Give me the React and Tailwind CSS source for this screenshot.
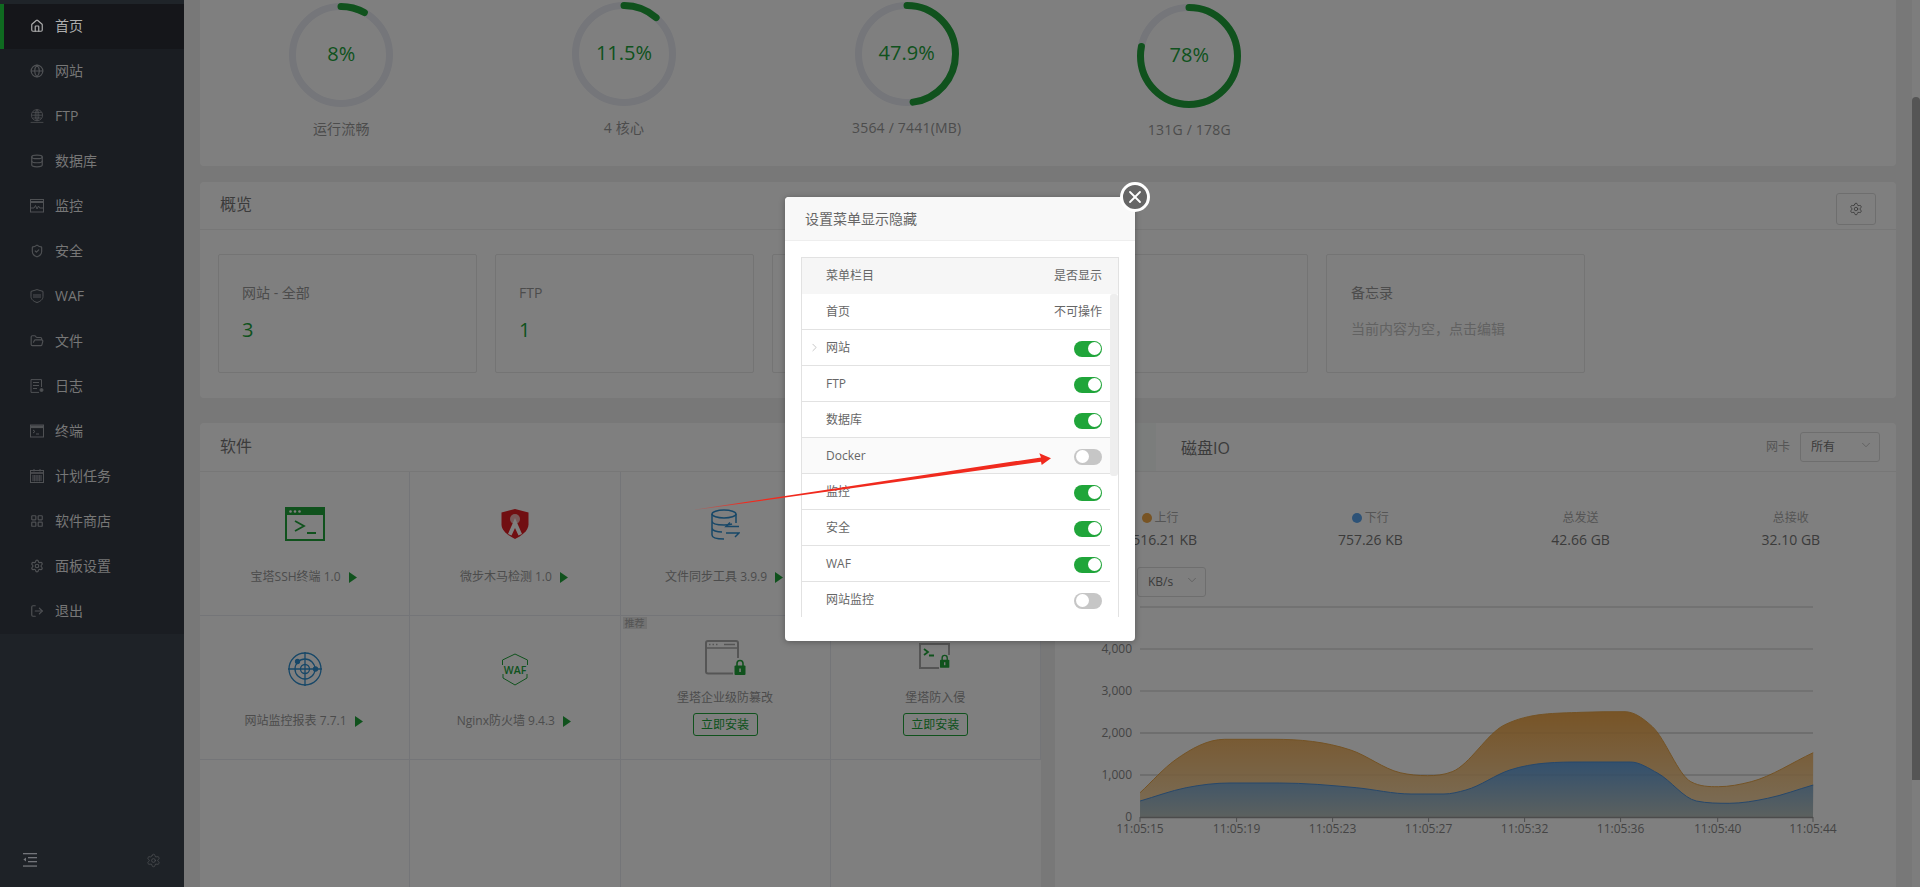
import React from 'react';
import { Home, Globe, Database, ShieldCheck, FolderOpen, LayoutGrid, Settings, LogOut, ChevronDown, ChevronRight, X } from 'lucide-react';

const FONT = "[font-family:'Open_Sans','Noto_Sans_CJK_SC',sans-serif]";

function FtpIcon() {
  return (
    <svg width="14" height="14" viewBox="0 0 14 14" fill="none" stroke="currentColor" strokeWidth="0.8">
      <circle cx="7" cy="6.2" r="5.6" />
      <path d="M1.4 6.2h11.2M7 .6v11.200M2.400 3.400h9.200M2.400 9h9.200M7 .6C4.600 3 4.600 9.400 7 11.800M7 .6c2.400 2.400 2.400 8.800 0 11.200M.6 13.400h12.800" />
    </svg>
  );
}
function MonitorIcon() {
  return (
    <svg width="14" height="14" viewBox="0 0 14 14" fill="none" stroke="currentColor" strokeWidth="1">
      <rect x=".5" y=".5" width="13" height="12.5" />
      <path d="M.5 3h13" strokeWidth="2" />
      <path d="M1 9h3l1.500-2.500L7 10l1.500-3 1.200 2H13" />
    </svg>
  );
}
function WafIcon() {
  return (
    <svg width="14" height="14" viewBox="0 0 14 14" fill="none" stroke="currentColor" strokeWidth="1">
      <path d="M7 .6 13 2.400v5.200c0 3-3 5-6 5.900-3-.9-6-2.900-6-5.900V2.400z" />
      <path d="M3 6h8M3 8h8" />
    </svg>
  );
}
function LogIcon() {
  return (
    <svg width="14" height="14" viewBox="0 0 14 14" fill="none" stroke="currentColor" strokeWidth="1">
      <path d="M11.500 8V.6H1v12.800h8" />
      <path d="M3 3.500h6M3 6.500h6M3 9.500h4" />
      <circle cx="11.500" cy="11" r="1.500" fill="currentColor" />
    </svg>
  );
}
function TermIcon() {
  return (
    <svg width="14" height="14" viewBox="0 0 14 14" fill="none" stroke="currentColor" strokeWidth="1">
      <rect x=".5" y="1" width="13" height="12" />
      <path d="M.5 2.800h13" strokeWidth="2.600" />
      <path d="M3 6l2 1.500L3 9M6 10h3" />
    </svg>
  );
}
function CalIcon() {
  return (
    <svg width="14" height="14" viewBox="0 0 14 14" fill="none" stroke="currentColor" strokeWidth="1">
      <rect x=".5" y="1.500" width="13" height="12" />
      <path d="M.5 4h13" strokeWidth="1.600" />
      <path d="M4 0v2.500M10 0v2.500M2 7h10M2 9h10M2 11h10" />
      <path d="M4.500 6v6.500M7 6v6.500M9.500 6v6.500" strokeWidth=".6" />
    </svg>
  );
}
function CollapseIcon() {
  return (
    <svg width="14" height="14" viewBox="0 0 14 14" fill="#73757a">
      <rect x="0" y="0" width="14" height="1.300" />
      <rect x="5" y="4" width="9" height="1.300" />
      <rect x="5" y="8" width="9" height="1.300" />
      <rect x="0" y="12.400" width="14" height="1.300" />
      <path d="M3 4.500v4L0.400 6.500z" />
    </svg>
  );
}

const MENU = [
  ['首页', <Home size={14} />],
  ['网站', <Globe size={14} />],
  ['FTP', <FtpIcon />],
  ['数据库', <Database size={14} />],
  ['监控', <MonitorIcon />],
  ['安全', <ShieldCheck size={14} />],
  ['WAF', <WafIcon />],
  ['文件', <FolderOpen size={14} />],
  ['日志', <LogIcon />],
  ['终端', <TermIcon />],
  ['计划任务', <CalIcon />],
  ['软件商店', <LayoutGrid size={14} />],
  ['面板设置', <Settings size={14} />],
  ['退出', <LogOut size={14} />],
];

function Sidebar() {
  return (
    <aside className="flex h-full w-[184px] shrink-0 flex-col bg-[#1e2227]">
      <div className="h-[4px] bg-[#1f2429]" />
      <nav className="bg-[#1a1d22]">
        {MENU.map(([label, icon], i) =>
          i === 0 ? (
            <div key={label} className="flex h-[45px] items-center gap-[11px] border-l-4 border-[#0f6a20] bg-[#15161a] pb-[2px] pl-[26px] text-[14px] text-[#aeaeae]">
              <span className="flex w-[14px] text-[#aeaeae]">{icon}</span>
              <span>{label}</span>
            </div>
          ) : (
            <div key={label} className="flex h-[45px] items-center gap-[11px] pb-[2px] pl-[30px] text-[14px] text-[#777777]">
              <span className="flex w-[14px] text-[#4f5154]">{icon}</span>
              <span>{label}</span>
            </div>
          )
        )}
      </nav>
      <div className="mt-auto flex h-[54px] items-center justify-between pl-[23px] pr-[23px] text-[#4f5154]">
        <CollapseIcon />
        <Settings size={15} strokeWidth={1.2} />
      </div>
    </aside>
  );
}

function Gauge({ pct, text, label, offset }) {
  const r = 48.5;
  const c = 2 * Math.PI * r;
  return (
    <div className={`flex flex-col items-center ${offset}`}>
      <div className="relative h-[104px] w-[104px]">
        <svg width="104" height="104" viewBox="0 0 104 104" fill="none">
          <circle cx="52" cy="52" r={r} stroke="#eaecf4" strokeWidth="7" />
          <circle cx="52" cy="52" r={r} stroke="#20a53a" strokeWidth="7" strokeLinecap="round" strokeDasharray={`${(c * pct) / 100} ${c}`} transform="rotate(-90 52 52)" />
        </svg>
        <div className="absolute inset-0 flex items-center justify-center pb-[2px] text-[20px] text-[#20a53a]">{text}</div>
      </div>
      <div className="mt-[12px] text-[14px] leading-[20px] tracking-[0.2px] text-[#999]">{label}</div>
    </div>
  );
}

function StatCard({ title, value }) {
  return (
    <div className="h-[119px] w-[259px] shrink-0 rounded-[2px] border border-[#e8e8e8] pl-[23px] pt-[28px]">
      <div className="text-[14px] leading-[20px] text-[#999]">{title}</div>
      <div className="mt-[13px] text-[20px] leading-[28px] text-[#20a53a]">{value}</div>
    </div>
  );
}

function Play() {
  return (
    <svg width="8" height="11" viewBox="0 0 8 11" className="ml-[8px] shrink-0"><path d="M0 0l8 5.500L0 11z" fill="#20a53a" /></svg>
  );
}

function SshIcon() {
  return (
    <svg width="40" height="34" viewBox="0 0 40 34" fill="none">
      <rect x="1" y="1" width="38" height="32" stroke="#20a53a" strokeWidth="2" />
      <rect x="1" y="1" width="38" height="7" fill="#20a53a" />
      <g fill="#fff"><circle cx="5.500" cy="4.500" r="1.300" /><circle cx="10" cy="4.500" r="1.300" /><circle cx="14.500" cy="4.500" r="1.300" /></g>
      <path d="M10 14l9 5-9 5M22 26h9" stroke="#20a53a" strokeWidth="1.800" />
    </svg>
  );
}
function RedShield() {
  return (
    <svg width="28" height="30" viewBox="0 0 28 30" fill="none">
      <path d="M14 0l13.500 3.500v12C27.500 22 20 27 14 30 8 27 .5 22 .5 15.500V3.500z" fill="#e31e24" />
      <circle cx="14" cy="10" r="5" fill="#f2b5b5" />
      <path d="M14 9 7 25l3.500 1.500L14 19l3.500 7.500L21 25z" fill="#fff" />
    </svg>
  );
}
function SyncIcon() {
  return (
    <svg width="29" height="31" viewBox="0 0 29 31" fill="none" stroke="#2e8fd0" strokeWidth="1.500">
      <ellipse cx="13" cy="5" rx="12" ry="4" />
      <path d="M1 5v21c0 2.500 5 4 12 4M25 5v9M1 12c0 2.500 5 4 12 4 3 0 6-.3 8-1M1 19c0 2.500 5 4 10 4" />
      <path d="M28 17.500H15l4-4M15 24h13l-4 4" />
    </svg>
  );
}
function RadarIcon() {
  return (
    <svg width="34" height="34" viewBox="0 0 34 34" fill="none" stroke="#2e8fd0" strokeWidth="1.300">
      <circle cx="17" cy="17" r="16" /><circle cx="17" cy="17" r="10" /><circle cx="17" cy="17" r="4.500" />
      <path d="M17 0v34M0 17h34" />
      <circle cx="9.500" cy="9.500" r="2" fill="#2e8fd0" /><circle cx="27.500" cy="17" r="2" fill="#2e8fd0" />
    </svg>
  );
}
function WafShield() {
  return (
    <svg width="28" height="33" viewBox="0 0 28 33" fill="none">
      <path d="M1.500 12V7l12.500-6 12.500 6v5M2 21v4l12 7 12-7v-4" stroke="#20a53a" strokeWidth="1" />
      <text x="14" y="20.500" textAnchor="middle" fontSize="10.500" fontWeight="600" fill="#20a53a" fontFamily="Open Sans, sans-serif">WAF</text>
    </svg>
  );
}
function Lock({ x, y, s = 1 }) {
  return (
    <g transform={`translate(${x} ${y}) scale(${s})`}>
      <rect x="0" y="5.500" width="11" height="9.500" rx="1" fill="#20a53a" />
      <path d="M2.500 6V3.500a3 3 0 0 1 6 0V6" stroke="#20a53a" strokeWidth="1.600" fill="none" />
      <rect x="4.800" y="8.500" width="1.500" height="3.500" fill="#fff" />
    </g>
  );
}
function TamperIcon() {
  return (
    <svg width="41" height="35" viewBox="0 0 41 35" fill="none">
      <path d="M28 33.500H3a2 2 0 0 1-2-2V3a2 2 0 0 1 2-2h28a2 2 0 0 1 2 2v15" stroke="#aaa" strokeWidth="2" />
      <path d="M1 8h32M4 4.500h1.500M7.500 4.500H9M11 4.500h1.500M19 4.500h11" stroke="#aaa" strokeWidth="1.500" />
      <Lock x="29.500" y="20" />
    </svg>
  );
}
function IntrusionIcon() {
  return (
    <svg width="32" height="27" viewBox="0 0 32 27" fill="none">
      <path d="M20 25H1V1h29v11" stroke="#aaa" strokeWidth="2" />
      <path d="M5 6l4 3-4 3M10 12.500h5" stroke="#20a53a" strokeWidth="1.800" />
      <Lock x="21" y="12" s="0.85" />
    </svg>
  );
}

function AppCell({ icon, name, row }) {
  return (
    <div className={`flex h-[144px] flex-col items-center border-b border-r border-[#e9ebf0] ${row === 1 ? 'pt-[35px]' : 'pt-[36px]'}`}>
      <div className="flex h-[34px] items-center justify-center">{icon}</div>
      <div className={`flex h-[20px] -translate-x-[1px] items-center text-[12px] text-[#999] ${row === 1 ? 'mt-[26px]' : 'mt-[25px]'}`}>
        <span>{name}</span>
        <Play />
      </div>
    </div>
  );
}

function InstallCell({ icon, name, tag, pad }) {
  return (
    <div className={`relative flex h-[144px] flex-col items-center border-b border-r border-[#e9ebf0] ${pad}`}>
      {tag && <div className="absolute left-[2px] top-[1px] bg-[#e6e6e6] px-[2px] text-[10px] leading-[12px] text-[#aaa]">推荐</div>}
      <div className="flex items-center justify-center">{icon}</div>
      <div className="mt-auto flex h-[20px] items-center text-[12px] text-[#999]">{name}</div>
      <div className="mb-[23px] mt-[5px] flex h-[23px] w-[65px] items-center justify-center rounded-[3px] border border-[#20a53a] text-[12px] text-[#20a53a]">立即安装</div>
    </div>
  );
}

function SoftwareCard() {
  return (
    <section className="h-[500px] w-[841px] shrink-0 rounded-t-[4px] bg-white">
      <header className="flex h-[49px] items-center border-b border-[#eee] pb-[2px] pl-[20px] text-[16px] text-[#777]">软件</header>
      <div className="grid grid-cols-4">
        <AppCell row={1} icon={<SshIcon />} name="宝塔SSH终端 1.0" />
        <AppCell row={1} icon={<RedShield />} name="微步木马检测 1.0" />
        <AppCell row={1} icon={<SyncIcon />} name="文件同步工具 3.9.9" />
        <div className="h-[144px] border-b border-[#e9ebf0]" />
        <AppCell row={2} icon={<RadarIcon />} name="网站监控报表 7.7.1" />
        <AppCell row={2} icon={<WafShield />} name="Nginx防火墙 9.4.3" />
        <InstallCell tag pad="pt-[24px]" icon={<TamperIcon />} name="堡塔企业级防篡改" />
        <InstallCell pad="pt-[27px]" icon={<IntrusionIcon />} name="堡塔防入侵" />
        <div className="h-[144px] border-r border-[#e9ebf0]" />
        <div className="h-[144px] border-r border-[#e9ebf0]" />
        <div className="h-[144px] border-r border-[#e9ebf0]" />
        <div className="h-[144px]" />
      </div>
    </section>
  );
}

// cubic through the points: flat at extremes, averaged slopes limited to avoid overshoot
function smooth(pts) {
  const n = pts.length;
  const dx = [], s = [], t = [];
  for (let i = 0; i < n - 1; i++) {
    dx[i] = pts[i + 1][0] - pts[i][0];
    s[i] = (pts[i + 1][1] - pts[i][1]) / dx[i];
  }
  t[0] = s[0];
  t[n - 1] = s[n - 2];
  for (let i = 1; i < n - 1; i++) {
    if (s[i - 1] * s[i] <= 0) t[i] = 0;
    else {
      const avg = (dx[i] * s[i - 1] + dx[i - 1] * s[i]) / (dx[i] + dx[i - 1]);
      const lim = 3 * Math.min(Math.abs(s[i - 1]), Math.abs(s[i]));
      t[i] = Math.sign(avg) * Math.min(Math.abs(avg), lim);
    }
  }
  let d = `M${pts[0][0].toFixed(1)} ${pts[0][1].toFixed(1)}`;
  for (let i = 0; i < n - 1; i++) {
    const h = dx[i] / 3;
    d += ` C${(pts[i][0] + h).toFixed(1)} ${(pts[i][1] + t[i] * h).toFixed(1)} ${(pts[i + 1][0] - h).toFixed(1)} ${(pts[i + 1][1] - t[i + 1] * h).toFixed(1)} ${pts[i + 1][0].toFixed(1)} ${pts[i + 1][1].toFixed(1)}`;
  }
  return d;
}
const conv = (a) => a.map(([X, Y]) => [1060 + X / 1.823, 420 + Y / 3]);
const ORANGE = conv([[146,1118],[210,1020],[300,958],[390,958],[530,990],[620,1058],[670,1067],[715,1055],[810,915],[950,877],[1030,875],[1080,920],[1150,1085],[1200,1100],[1260,1085],[1373,998]]);
const BLUE = conv([[146,1143],[230,1103],[310,1089],[400,1089],[540,1103],[640,1122],[700,1122],[740,1110],[820,1050],[950,1026],[1040,1026],[1090,1060],[1160,1143],[1220,1150],[1290,1135],[1373,1095]]);
const TICKS = [[1140,'11:05:15'],[1236.6,'11:05:19'],[1332.6,'11:05:23'],[1428.6,'11:05:27'],[1524.6,'11:05:32'],[1620.6,'11:05:36'],[1717.7,'11:05:40'],[1813,'11:05:44']];
const YS = [[817,'0'],[775,'1,000'],[733,'2,000'],[691,'3,000'],[649,'4,000'],[607,'5,000']];

function Chart() {
  const o = smooth(ORANGE);
  const b = smooth(BLUE);
  return (
    <svg width="841" height="250" viewBox="1055 600 841 250" className="mt-[3px] block" fontFamily="Open Sans, sans-serif" fontSize="12">
      <defs>
        <linearGradient id="go" gradientUnits="userSpaceOnUse" x1="0" y1="710" x2="0" y2="817">
          <stop offset="0" stopColor="#f0a84c" /><stop offset="1" stopColor="#f5dcb4" />
        </linearGradient>
        <linearGradient id="gb" gradientUnits="userSpaceOnUse" x1="0" y1="760" x2="0" y2="817">
          <stop offset="0" stopColor="#629fdc" /><stop offset="1" stopColor="#b8c2be" />
        </linearGradient>
      </defs>
      {YS.slice(1).map(([y]) => <path key={y} d={`M1140 ${y}H1813`} stroke="#c9c9c9" />)}
      <path d={`${o} L1813 817 L1140 817Z`} fill="url(#go)" />
      <path d={`${b} L1813 817 L1140 817Z`} fill="url(#gb)" />
      <path d={o} stroke="#e8a64a" fill="none" />
      <path d={b} stroke="#4d8fd6" fill="none" />
      <path d="M1140 775H1813M1140 733H1813" stroke="#000" strokeOpacity="0.06" />
      <path d="M1140 817.500H1813" stroke="#999" strokeWidth="1.500" />
      {TICKS.map(([x, t]) => (
        <g key={t}>
          <path d={`M${x} 817v5`} stroke="#999" />
          <text x={x} y="833" textAnchor="middle" fill="#888">{t}</text>
        </g>
      ))}
      {YS.map(([y, t]) => <text key={t} x="1132" y={y + 4} textAnchor="end" fill="#888">{t}</text>)}
    </svg>
  );
}

function Select({ text, width }) {
  return (
    <div className={`flex h-[30px] items-center justify-between rounded-[3px] border border-[#ddd] pl-[10px] pr-[6px] text-[12px] text-[#777] ${width}`}>
      <span>{text}</span>
      <ChevronDown size={14} strokeWidth={1} className="-translate-y-[2px] text-[#999]" />
    </div>
  );
}

function Traffic({ dot, label, value, pad }) {
  return (
    <div className="flex flex-col items-center">
      <div className="flex h-[20px] items-center text-[12px] text-[#aaa]">
        {dot && <span className={`mr-[3px] h-[10px] w-[10px] rounded-full ${dot}`} />}
        <span>{label}</span>
      </div>
      <div className={`mt-[2px] h-[20px] text-[14px] leading-[20px] text-[#777] ${pad || ''}`}>{value}</div>
    </div>
  );
}

function NetworkCard() {
  return (
    <section className="h-[500px] w-[841px] shrink-0 rounded-t-[4px] bg-white">
      <header className="flex h-[49px] items-center border-b border-[#eee] pr-[16px] text-[16px] text-[#777]">
        <div className="flex h-full w-[101px] items-center justify-center bg-[#f7fbf8] text-[#20a53a]">网络</div>
        <div className="ml-[25px] mt-[2px]">磁盘IO</div>
        <div className="ml-auto mr-[10px] text-[12px] text-[#aaa]">网卡</div>
        <Select text="所有" width="w-[80px]" />
      </header>
      <div className="grid grid-cols-4 pt-[36px]">
        <Traffic dot="bg-[#f0a848]" label="上行" value="516.21 KB" pad="pl-[9px]" />
        <Traffic dot="bg-[#5aa5ee]" label="下行" value="757.26 KB" />
        <Traffic label="总发送" value="42.66 GB" />
        <Traffic label="总接收" value="32.10 GB" />
      </div>
      <div className="mt-[17px] flex justify-start pl-[82px]">
        <Select text="KB/s" width="w-[69px]" />
      </div>
      <Chart />
    </section>
  );
}

const ROWS = [
  ['首页', 'text'],
  ['网站', true, true],
  ['FTP', true],
  ['数据库', true],
  ['Docker', false],
  ['监控', true],
  ['安全', true],
  ['WAF', true],
  ['网站监控', false],
];

function Toggle({ on }) {
  return on ? (
    <div className="mt-[2px] flex h-[16px] w-[28px] items-center justify-end rounded-full bg-[#20a53a] pr-[1.5px]">
      <div className="h-[13px] w-[13px] rounded-full bg-white" />
    </div>
  ) : (
    <div className="mt-[2px] flex h-[16px] w-[28px] items-center justify-start rounded-full bg-[#c6c6c6] pl-[2px]">
      <div className="h-[13px] w-[13px] rounded-full bg-white" />
    </div>
  );
}

function Modal() {
  return (
    <div className="absolute left-[601px] top-[197px] flex h-[444px] w-[350px] flex-col rounded-[4px] bg-white shadow-[0_1px_6px_rgba(0,0,0,0.3)]">
      <div className="flex h-[44px] shrink-0 items-center rounded-t-[4px] border-b border-[#eee] bg-[#f8f8f8] pl-[20px] text-[14px] text-[#666]">设置菜单显示隐藏</div>
      <div className="absolute -right-[15px] -top-[15px] flex h-[30px] w-[30px] items-center justify-center rounded-full border-[3px] border-white bg-[#666] text-white">
        <X size={20} strokeWidth={2.2} />
      </div>
      <div className="mx-[16px] mt-[16px] h-[360px] overflow-hidden border-x border-t border-[#e2e2e2] text-[12px] text-[#666]">
        <div className="flex h-[36px] items-center justify-between bg-[#f6f6f6] pl-[24px] pr-[16px]">
          <span>菜单栏目</span>
          <span>是否显示</span>
        </div>
        <div className="flex">
          <div className="min-w-0 flex-1">
            {ROWS.map(([name, state, chevron]) => (
              <div key={name} className={`flex h-[36px] items-center border-b border-[#e2e2e2] pr-[8px] ${name === 'Docker' ? 'bg-[#fafafa]' : 'bg-white'}`}>
                <span className="flex w-[24px] shrink-0 justify-center text-[#999]">{chevron && <ChevronRight size={13} strokeWidth={1} />}</span>
                <span>{name}</span>
                <span className="ml-auto">{state === 'text' ? '不可操作' : <Toggle on={state} />}</span>
              </div>
            ))}
          </div>
          <div className="w-[8px] shrink-0">
            <div className="h-[182px] rounded-[3px] bg-[#eeeeee]" />
          </div>
        </div>
      </div>
    </div>
  );
}

function Main() {
  return (
    <main className="relative flex h-full min-w-0 flex-1 bg-[#f0f0f0]">
      <div className="min-w-0 flex-1 px-[16px]">
        <section className="grid h-[166px] grid-cols-6 rounded-b-[4px] bg-white">
          <Gauge pct={8} text="8%" label="运行流畅" offset="pt-[3px]" />
          <Gauge pct={11.5} text="11.5%" label="4 核心" offset="pt-[2px]" />
          <Gauge pct={47.9} text="47.9%" label="3564 / 7441(MB)" offset="pt-[2px]" />
          <Gauge pct={78} text="78%" label="131G / 178G" offset="pt-[4px]" />
        </section>
        <section className="mt-[16px] h-[216px] rounded-[4px] bg-white">
          <header className="flex h-[48px] items-center justify-between border-b border-[#eee] pl-[20px] pr-[20px] text-[16px] text-[#777]">
            <span className="mb-[3px]">概览</span>
            <span className="mt-[6px] flex h-[32px] w-[40px] items-center justify-center rounded-[3px] border border-[#ddd] text-[#666]"><Settings size={14} strokeWidth={1.3} /></span>
          </header>
          <div className="flex gap-[18px] px-[18px] pt-[24px]">
            <StatCard title="网站 - 全部" value="3" />
            <StatCard title="FTP" value="1" />
            <StatCard title="数据库 - 全部" value="1" />
            <StatCard title="安全风险" value="0" />
            <div className="h-[119px] w-[259px] shrink-0 rounded-[2px] border border-[#e8e8e8] pl-[24px] pt-[28px]">
              <div className="text-[14px] leading-[20px] text-[#999]">备忘录</div>
              <div className="mt-[16px] text-[14px] leading-[20px] text-[#c4c4c4]">当前内容为空，点击编辑</div>
            </div>
          </div>
        </section>
        <div className="mt-[25px] flex gap-[14px]">
          <SoftwareCard />
          <NetworkCard />
        </div>
      </div>
      <div className="w-[8px] shrink-0 bg-[#fafafa] pt-[97px]">
        <div className="h-[683px] rounded-t-[4px] bg-[#aaaaaa]" />
      </div>
      <div className="absolute inset-0 bg-black/50" />
      <Modal />
    </main>
  );
}

export default function App() {
  return (
    <div className={`relative flex h-[887px] w-[1920px] overflow-hidden ${FONT}`}>
      <Sidebar />
      <Main />
      <svg width="1920" height="887" viewBox="0 0 1920 887" className="pointer-events-none absolute left-0 top-0">
        <defs>
          <linearGradient id="arrowTail" gradientUnits="userSpaceOnUse" x1="695" y1="0" x2="745" y2="0">
            <stop offset="0" stopColor="#f02a1e" stopOpacity="0.15" /><stop offset="1" stopColor="#f02a1e" />
          </linearGradient>
        </defs>
        <polygon points="695,509.600 1041,457.400 1039.300,453.300 1051,458.300 1041.700,465 1041,461.800 695,510.100" fill="url(#arrowTail)" />
      </svg>
    </div>
  );
}
